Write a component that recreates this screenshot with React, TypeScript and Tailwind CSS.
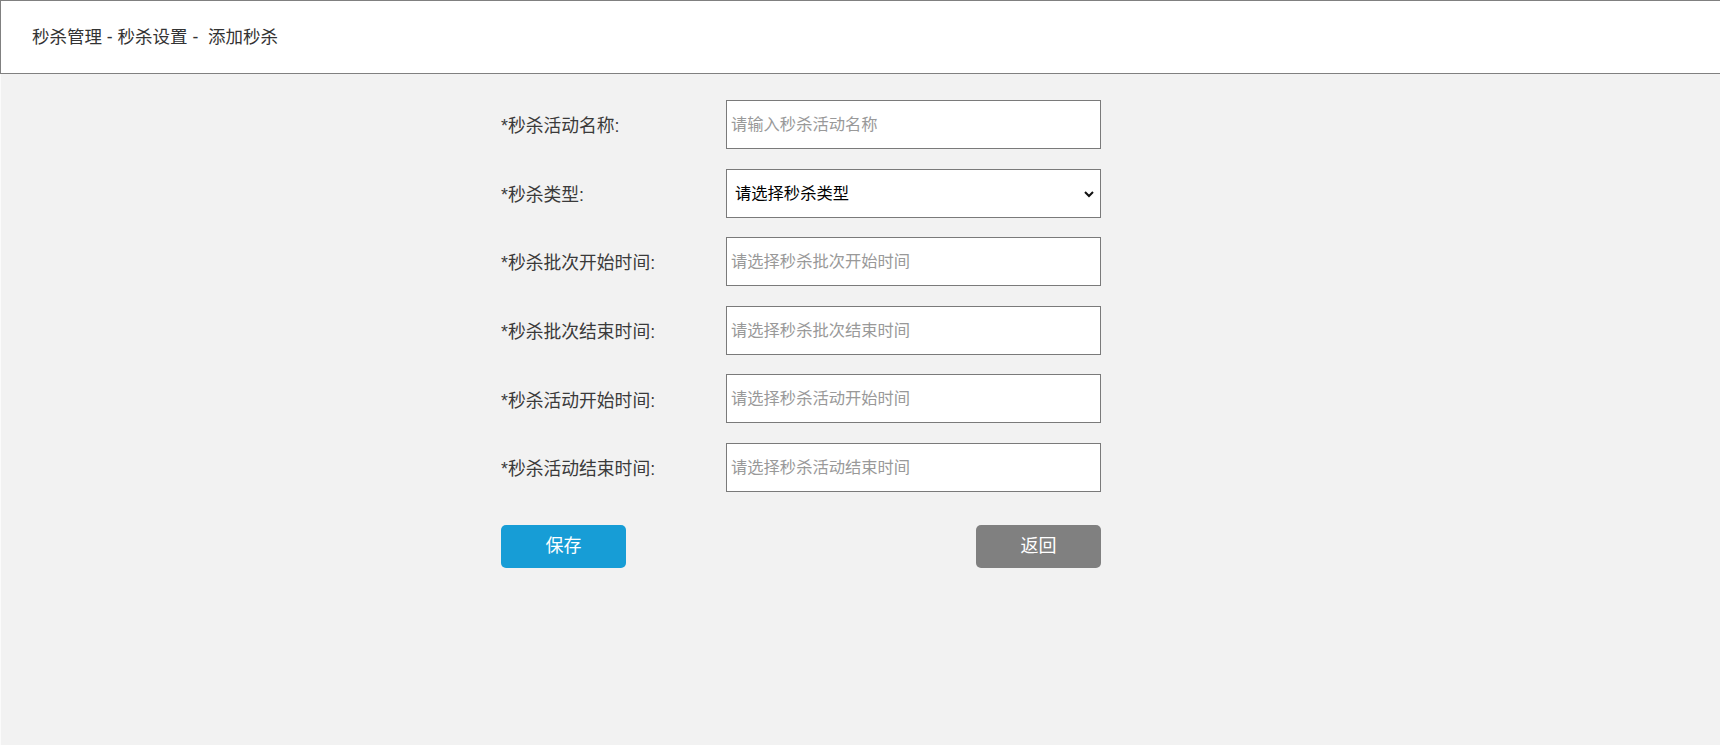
import React from "react";

const font = { fontFamily: '"Liberation Sans", "Noto Sans CJK SC", sans-serif' };

const fields = [
  { label: "*秒杀活动名称:", placeholder: "请输入秒杀活动名称" },
  { label: "*秒杀类型:", select: true },
  { label: "*秒杀批次开始时间:", placeholder: "请选择秒杀批次开始时间" },
  { label: "*秒杀批次结束时间:", placeholder: "请选择秒杀批次结束时间" },
  { label: "*秒杀活动开始时间:", placeholder: "请选择秒杀活动开始时间" },
  { label: "*秒杀活动结束时间:", placeholder: "请选择秒杀活动结束时间" },
];

export default function App() {
  return (
    <div className="min-h-[745px] w-[1720px] bg-[#f2f2f2] flex flex-col" style={font}>
      {/* header */}
      <div className="h-[74px] bg-white border-t border-l border-b border-[#808080] flex items-center pl-[31px] text-[17.5px] text-[#333]">
        秒杀管理 - 秒杀设置 -&nbsp; 添加秒杀
      </div>

      <div className="flex-1 border-l border-[#fbfbfb]">
        <form className="ml-[500px] w-[600px] pt-[26px] flex flex-col gap-[19.6px]">
          {fields.map((f) => (
            <div key={f.label} className="flex items-center h-[49px]">
              <label className="w-[225px] text-[17.8px] text-[#3a3a3a] pt-[4px]">{f.label}</label>
              {f.select ? (
                <div className="relative w-[375px] h-[49px] bg-white border border-[#7a7a7a] flex items-center pl-[8px] text-[16.3px] text-black">
                  请选择秒杀类型
                  <svg
                    className="absolute right-[5px] top-[18px]"
                    width="12"
                    height="12"
                    viewBox="0 0 12 12"
                    fill="none"
                    stroke="#111"
                    strokeWidth="2"
                  >
                    <path d="M2 4l4 4 4-4" />
                  </svg>
                </div>
              ) : (
                <input
                  type="text"
                  placeholder={f.placeholder}
                  className="w-[375px] h-[49px] bg-white border border-[#7a7a7a] pl-[4px] text-[16.3px] text-[#333] placeholder-[#999] outline-none"
                  style={font}
                />
              )}
            </div>
          ))}

          <div className="flex justify-between mt-[13px]">
            <button
              type="button"
              className="w-[125px] h-[43px] rounded-[5px] bg-[#179dd6] text-white text-[18px]"
              style={font}
            >
              保存
            </button>
            <button
              type="button"
              className="w-[125px] h-[43px] rounded-[5px] bg-[#808080] text-white text-[18px]"
              style={font}
            >
              返回
            </button>
          </div>
        </form>
      </div>
    </div>
  );
}
